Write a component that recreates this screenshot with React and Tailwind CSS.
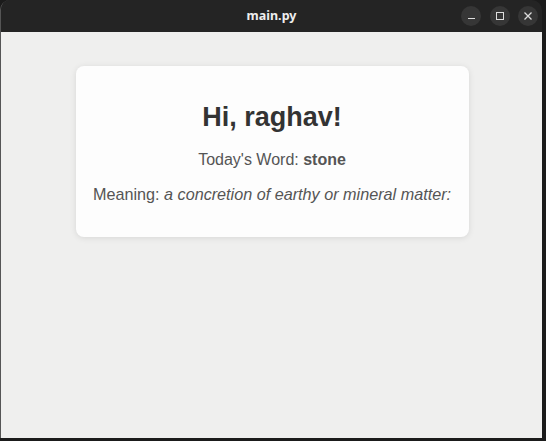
export default function App() {
  return (
    <div className="flex h-[441px] w-[546px] flex-col bg-[#1b1b1b] font-['Liberation_Sans',Arial,sans-serif]">
      <div className="mr-[4px] mb-[3px] flex flex-1 flex-col overflow-hidden rounded-t-[10px] border-l border-[#555]">
        <div className="relative flex h-[32px] shrink-0 items-center justify-center bg-[#242424]">
          <span className="font-['Noto_Sans',sans-serif] text-[12.5px] font-bold text-[#eeeeee]">main.py</span>
          <div className="absolute right-[4px] top-[6px] flex gap-[8.5px]">
            <div className="flex h-[20px] w-[20px] items-center justify-center rounded-full bg-[#363636]">
              <div className="h-[1px] w-[7px] translate-y-[2px] bg-[#dddddd]" />
            </div>
            <div className="flex h-[20px] w-[20px] items-center justify-center rounded-full bg-[#363636]">
              <div className="h-[8px] w-[8px] border border-[#dddddd]" />
            </div>
            <div className="flex h-[20px] w-[20px] items-center justify-center rounded-full bg-[#363636]">
              <svg width="8" height="8" viewBox="0 0 8 8">
                <path d="M0.5 0.5L7.5 7.5M7.5 0.5L0.5 7.5" stroke="#dddddd" strokeWidth="1.3" />
              </svg>
            </div>
          </div>
        </div>
        <div className="flex flex-1 flex-col items-center bg-[#efefee] pl-[1px] pt-[34px]">
          <div className="flex w-[393px] flex-col items-center rounded-[8px] bg-[#fdfdfd] pb-[34px] pt-[36px] shadow-[0_1px_6px_rgba(0,0,0,0.10)]">
            <h1 className="mb-[18px] text-[27px] font-bold leading-[31px] text-[#333333]">Hi, raghav!</h1>
            <p className="mb-[16px] text-[16px] leading-[18px] text-[#555555]">
              Today's Word: <b>stone</b>
            </p>
            <p className="text-[16.2px] leading-[18px] text-[#555555]">
              Meaning: <i>a concretion of earthy or mineral matter:</i>
            </p>
          </div>
        </div>
      </div>
    </div>
  );
}
